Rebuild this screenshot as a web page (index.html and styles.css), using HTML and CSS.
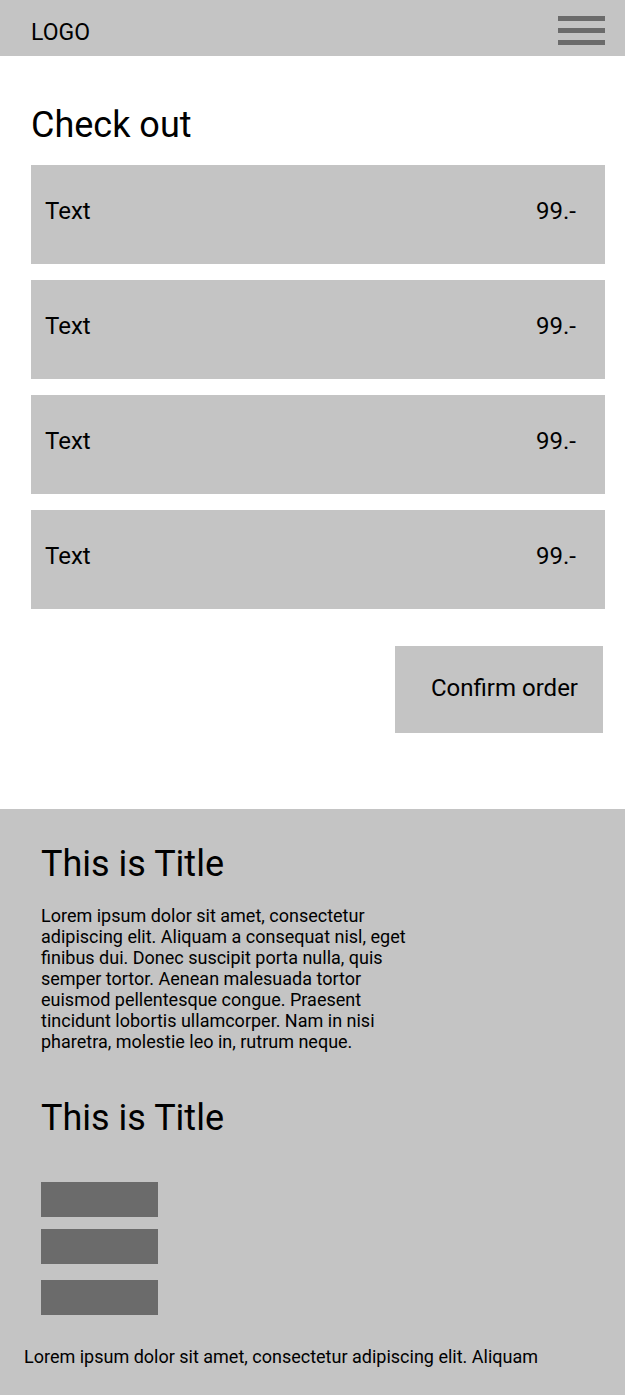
FILE: index.html
```html
<!DOCTYPE html>
<html lang="en">
<head>
<meta charset="utf-8">
<title>Check out</title>
<link rel="stylesheet" href="styles.css">
</head>
<body>
<header class="topbar">
  <div class="logo">LOGO</div>
  <div class="burger" aria-label="Menu">
    <span></span><span></span><span></span>
  </div>
</header>

<main class="checkout">
  <h1 class="page-title">Check out</h1>
  <ul class="items">
    <li class="item"><span>Text</span><span>99.-</span></li>
    <li class="item"><span>Text</span><span>99.-</span></li>
    <li class="item"><span>Text</span><span>99.-</span></li>
    <li class="item"><span>Text</span><span>99.-</span></li>
  </ul>
  <div class="actions">
    <button class="confirm">Confirm order</button>
  </div>
</main>

<footer class="footer">
  <div class="footer-inner">
    <h2 class="footer-title">This is Title</h2>
    <p class="footer-text">Lorem ipsum dolor sit amet, consectetur adipiscing elit. Aliquam a consequat nisl, eget finibus dui. Donec suscipit porta nulla, quis semper tortor. Aenean malesuada tortor euismod pellentesque congue. Praesent tincidunt lobortis ullamcorper. Nam in nisi pharetra, molestie leo in, rutrum neque.</p>
    <h2 class="footer-title second">This is Title</h2>
    <div class="blocks">
      <span class="block"></span>
      <span class="block"></span>
      <span class="block last"></span>
    </div>
  </div>
  <p class="footer-bottom">Lorem ipsum dolor sit amet, consectetur adipiscing elit. Aliquam</p>
</footer>
</body>
</html>
```

FILE: styles.css
```css
* {
  box-sizing: border-box;
}

html, body {
  margin: 0;
  padding: 0;
}

body {
  width: 625px;
  font-family: Roboto, "Noto Sans", Arial, sans-serif;
  color: #000;
  background: #fff;
}

/* Header */
.topbar {
  height: 56px;
  background: #c4c4c4;
  display: flex;
  justify-content: space-between;
  align-items: flex-start;
  padding: 0 20px 0 31px;
}

.logo {
  font-size: 23px;
  line-height: 26px;
  margin-top: 20px;
}

.burger {
  margin-top: 16px;
  width: 47px;
  display: flex;
  flex-direction: column;
  gap: 7px;
}

.burger span {
  display: block;
  height: 5px;
  background: #6b6b6b;
}

/* Checkout */
.checkout {
  padding: 0 20px 0 31px;
}

.page-title {
  margin: 48px 0 19px 0;
  font-size: 36px;
  line-height: 42px;
  font-weight: 400;
}

.items {
  list-style: none;
  margin: 0;
  padding: 0;
  display: flex;
  flex-direction: column;
  gap: 16px;
}

.item {
  height: 99px;
  background: #c4c4c4;
  display: flex;
  justify-content: space-between;
  align-items: flex-start;
  padding: 32px 29px 0 14px;
  font-size: 24px;
  line-height: 28px;
}

.actions {
  display: flex;
  justify-content: flex-end;
  padding: 37px 2px 0 0;
}

.confirm {
  width: 208px;
  height: 87px;
  border: 0;
  background: #c4c4c4;
  font-family: inherit;
  font-size: 24px;
  line-height: 28px;
  color: #000;
  text-align: left;
  padding: 0 0 3px 36px;
}

/* Footer */
.footer {
  margin-top: 76px;
  background: #c4c4c4;
  height: 586px;
  padding-top: 34px;
}

.footer-inner {
  padding-left: 41px;
}

.footer-title {
  margin: 0;
  font-size: 36px;
  line-height: 42px;
  font-weight: 400;
}

.footer-title.second {
  margin-top: 45px;
}

.footer-text {
  margin: 20px 0 0;
  width: 370px;
  font-size: 18px;
  line-height: 21px;
}

.blocks {
  margin-top: 43px;
  display: flex;
  flex-direction: column;
  gap: 12px;
}

.block {
  display: block;
  width: 117px;
  height: 35px;
  background: #6b6b6b;
}

.block.last {
  margin-top: 4px;
}

.footer-bottom {
  margin: 31px 0 0;
  padding-left: 24px;
  font-size: 18px;
  line-height: 21px;
}
```
